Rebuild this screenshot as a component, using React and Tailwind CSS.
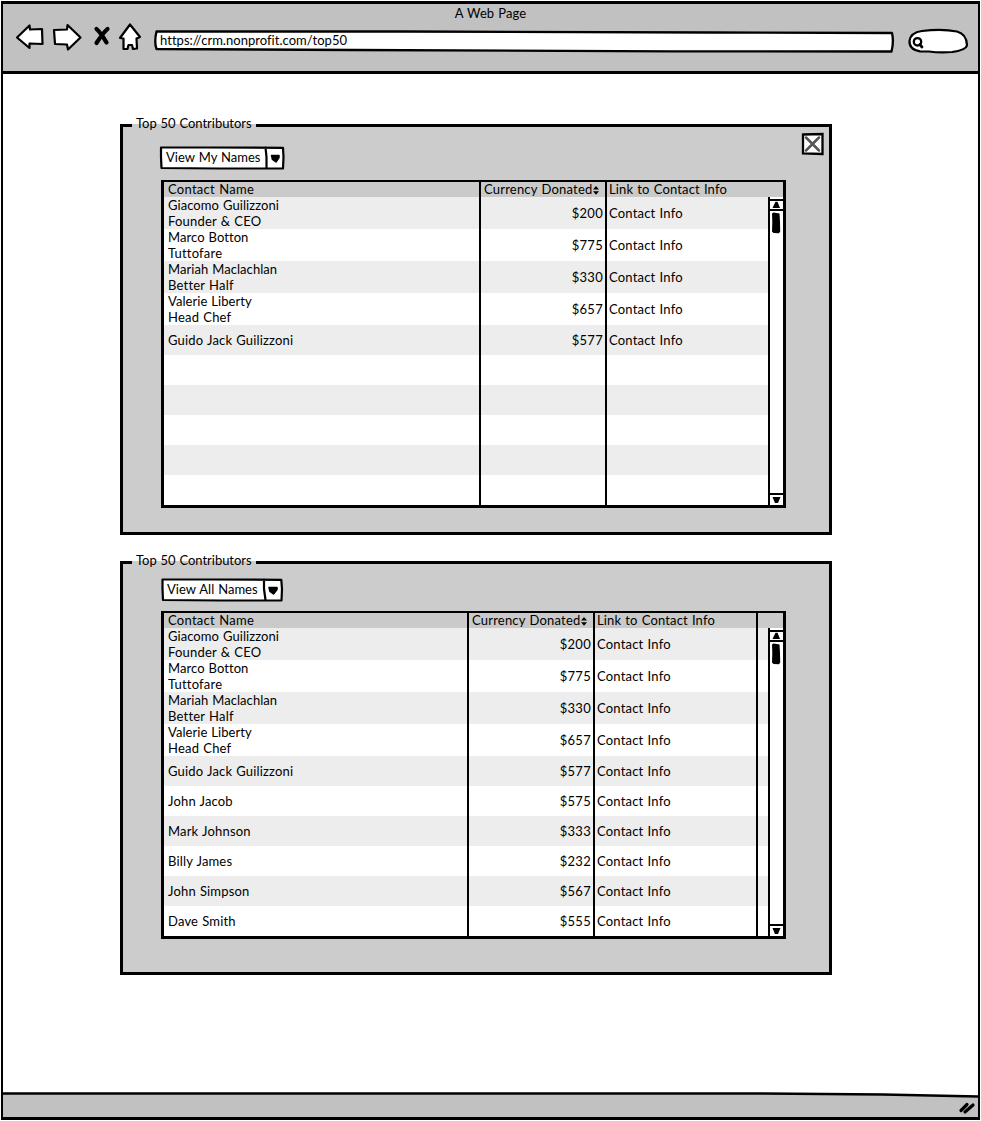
import React from "react";

const people = [
  { name: "Giacomo Guilizzoni", title: "Founder & CEO", amount: "$200" },
  { name: "Marco Botton", title: "Tuttofare", amount: "$775" },
  { name: "Mariah Maclachlan", title: "Better Half", amount: "$330" },
  { name: "Valerie Liberty", title: "Head Chef", amount: "$657" },
  { name: "Guido Jack Guilizzoni", amount: "$577" },
  { name: "John Jacob", amount: "$575" },
  { name: "Mark Johnson", amount: "$333" },
  { name: "Billy James", amount: "$232" },
  { name: "John Simpson", amount: "$567" },
  { name: "Dave Smith", amount: "$555" },
];

const myNames = [...people.slice(0, 5), {}, {}, {}, {}, {}];

function NavIcons() {
  return (
    <svg className="h-[36px] w-[130px] shrink-0" viewBox="12 20 130 36" fill="#fff" stroke="#000" strokeWidth="2.2" strokeLinejoin="round" strokeLinecap="round">
      <path d="M17 37.5 L29.5 25.5 L30 29.5 L42 29 L42.5 44 L29.5 43.5 L29.5 48 Z" />
      <path d="M54 30 L67 29.5 L67.5 25 L80.5 37.5 L68 49.5 L67 44.5 L55 44 Z" />
      <path d="M130 24.5 L140 37 L136.5 38.5 L137 48.5 L133 49 L132 45 L128.5 45 L127.5 49 L123.5 49 L123.5 38.5 L120 38 Z" />
      <path d="M96.5 29 Q101 33 106.5 42.5 M107.5 29 Q103 33 96.5 43" fill="none" strokeWidth="4.2" />
    </svg>
  );
}

function AddressBar() {
  return (
    <div className="relative ml-[10px] mt-[7px] flex h-[24px] w-[743px] shrink-0 items-center pb-[2px] pl-[8px]">
      <svg className="absolute inset-0" width="743" height="24" viewBox="0 0 743 24">
        <path d="M4.5 2.500 L250 2.500 L560 3.500 L740 4 Q742 13 739.5 22.500 L520 22.3 L200 21 L4.5 20 Q2 13 4.5 2.500 Z" fill="#fff" stroke="#000" strokeWidth="2.3" strokeLinejoin="round" />
      </svg>
      <span className="relative text-[13px] leading-[16px] tracking-[0.03px]">https://crm.nonprofit.com/top50</span>
    </div>
  );
}

function SearchPill() {
  return (
    <svg className="ml-[11px] mt-[5px] h-[28px] w-[64px] shrink-0" viewBox="906 26 64 28" fill="none" stroke="#000" strokeWidth="2.2" strokeLinecap="round">
      <path d="M920 50.3 Q909 48.5 909.5 40 Q910.5 31.5 922 30 Q942 27.5 957 30.5 Q966.5 33 967 44 Q966.500 49 952 51 Q940 52 929 50.5 Z" fill="#fff" />
      <circle cx="917.5" cy="40.800" r="3.7" strokeWidth="2.3" />
      <path d="M919.8 43.500 L922 46" strokeWidth="2.7" />
    </svg>
  );
}

function Select({ label, wide }) {
  return (
    <div className={wide ? "relative flex h-[25px] w-[126px] items-center pl-[7px] pt-[1px]" : "relative flex h-[25px] w-[123px] items-center pl-[6px] pt-[1px]"}>
      <svg className="absolute inset-0 h-full w-full" viewBox={wide ? "0 0 126 25" : "0 0 123 25"} fill="none" stroke="#000" strokeWidth="2.200" strokeLinejoin="round" strokeLinecap="round">
        {wide ? (
          <path d="M2 2.500 L50 2.500 L124 2.800 L124.500 12 L124 23.500 L60 23.500 L2.500 23 L2 12 Z M106.500 2.500 L107.500 12 L107.500 23" fill="#fff" />
        ) : (
          <path d="M1.500 2.500 L50 2.500 L120.300 2.800 L121 12 L120.500 23.500 L60 23.500 L2 23 L1.500 12 Z M103 2.500 L103 12 L104.500 23" fill="#fff" />
        )}
        {wide ? (
          <path d="M112.500 10.500 L120 10.500 L120 12.500 L117 17 L113.500 14.500 Z" fill="#000" strokeWidth="1.500" />
        ) : (
          <path d="M108 10.500 L116 10.500 L116 12.500 L112.500 17 L109 14.500 Z" fill="#000" strokeWidth="1.500" />
        )}
      </svg>
      <span className="relative tracking-[0.02px]">{label}</span>
    </div>
  );
}

function ScrollBar() {
  return (
    <div className="flex w-[15px] shrink-0 flex-col border-l-2 border-black bg-white pt-[2px]">
      <div className="flex h-[12px] items-center justify-center border-y-2 border-black">
        <svg width="11" height="8" viewBox="0 0 11 8"><path d="M1.500 7 L4.500 0.800 L6.500 0.800 L9 7 Z" /></svg>
      </div>
      <svg className="mt-px h-[22px] w-[12px]" viewBox="0 0 12 22">
        <path d="M2 1.500 L3.500 0.500 L9.500 1.500 L10 10 L10.200 19.500 L9 21.200 L3.500 21 L2 19.500 L2.300 10 Z" />
      </svg>
      <div className="grow" />
      <div className="flex h-[12px] items-center justify-center border-t-2 border-black">
        <svg width="11" height="8" viewBox="0 0 11 8"><path d="M1.500 1 L9.500 1 L7 7 L4 7 Z" /></svg>
      </div>
    </div>
  );
}

function SortIcon() {
  return (
    <svg className="ml-[1px] mt-[4px] h-[9px] w-[6px]" viewBox="0 0 6 9">
      <path d="M0 3.500 L3 0 L6 3.500 Z M0 5.200 L3 8.700 L6 5.200 Z" />
    </svg>
  );
}

function Table({ rows, extra }) {
  const cols = extra
    ? "grid grid-cols-[303px_126px_163px_1fr]"
    : "grid grid-cols-[315px_126px_1fr]";
  return (
    <div className="flex h-[328px] w-[625px] flex-col border-[3px] border-t-2 border-black">
      <div className={`${cols} h-[15px] shrink-0 bg-[#cacaca] leading-[15px]`}>
        <div className="pl-[4px] tracking-[0.28px]">Contact Name</div>
        <div className="flex whitespace-nowrap border-l-2 border-black pl-[3px] tracking-[0.2px]">Currency Donated<SortIcon /></div>
        <div className="whitespace-nowrap border-l-2 border-black pl-[2px] tracking-[0.15px]">Link to Contact Info</div>
        {extra && <div className="border-l-2 border-black" />}
      </div>
      <div className="flex min-h-0 grow">
        <div className="grow">
          {rows.map((r, i) => (
            <div key={i} className={`${cols} ${r.title ? "h-[32px]" : "h-[30px]"} ${i % 2 ? "bg-white" : "bg-[#ededed]"}`}>
              <div className="flex flex-col justify-center pl-[4px] leading-[16px]">
                <div className={r.title ? "tracking-[0.06px]" : "tracking-[0.17px]"}>{r.name}</div>
                {r.title && <div>{r.title}</div>}
              </div>
              <div className="flex items-center justify-end border-l-2 border-black pr-[2px] pt-[2px] tracking-[0.3px]">{r.amount}</div>
              <div className="flex items-center border-l-2 border-black pl-[2px] pt-[2px]">{r.amount && "Contact Info"}</div>
              {extra && <div className="border-l-2 border-black" />}
            </div>
          ))}
        </div>
        <ScrollBar />
      </div>
    </div>
  );
}

function Panel({ children }) {
  return (
    <section className="w-[712px]">
      <div className="flex h-[3px] items-start bg-[#ccc]">
        <div className="h-[3px] w-[12px] bg-black" />
        <div className="flex h-[3px] w-[124px] items-center pl-[4px]">
          <h2 className="-mt-[5px] whitespace-nowrap leading-[16px] tracking-[-0.03px]">Top 50 Contributors</h2>
        </div>
        <div className="h-[3px] grow bg-black" />
      </div>
      <div className="border-[3px] border-t-0 border-black bg-[#ccc]">{children}</div>
    </section>
  );
}

export default function App() {
  return (
    <div className="h-[1121px] w-[981px] overflow-hidden bg-white p-[1px] font-['Lato',sans-serif] text-[13px] tracking-[0.2px] text-black [word-spacing:0.6px]">
      <div className="flex h-[1119px] w-[979px] flex-col border-x-2 border-y-[3px] border-black">
        <header className="h-[70px] shrink-0 border-b-[3px] border-black bg-[#c1c1c1]">
          <div className="pt-[1px] text-center leading-[17px] tracking-[0.1px]">A Web Page</div>
          <div className="flex pl-[9px]">
            <div className="-mt-[2px]"><NavIcons /></div>
            <AddressBar />
            <SearchPill />
          </div>
        </header>
        <main className="grow pl-[117px] pt-[50px]">
          <Panel>
            <div className="h-[405px] pl-[38px] pt-[18px]">
              <div className="flex h-[35px] items-start justify-between pr-[5px]">
                <div className="-ml-[2px]"><Select label="View My Names" wide /></div>
                <svg className="-mt-[13px]" width="24" height="24" viewBox="0 0 24 24">
                  <path d="M3 2.500 L22.500 2 L22.500 22 L3 21.500 Z" fill="#fff" stroke="#000" strokeWidth="2.300" />
                  <path d="M6 5.500 L19 18.500 M19 5.500 L6 18.500" stroke="#555" strokeWidth="2.500" strokeLinecap="round" />
                </svg>
              </div>
              <Table rows={myNames} />
            </div>
          </Panel>
          <div className="h-[26px]" />
          <Panel>
            <div className="h-[408px] pl-[38px] pt-[13px]">
              <div className="h-[34px]"><Select label="View All Names" /></div>
              <Table rows={people} extra />
            </div>
          </Panel>
        </main>
        <footer className="h-[25px] shrink-0">
          <svg className="block h-full w-full" viewBox="0 0 975 25" preserveAspectRatio="none">
            <path d="M0 1.500 L760 1.500 L880 2.500 L975 4.500 L975 25 L0 25 Z" fill="#c1c1c1" />
            <path d="M0 1.500 L760 1.500 L880 2.500 L975 4.500" fill="none" stroke="#000" strokeWidth="2.600" />
            <path d="M958 18.500 L964 12.500 M962 20 L970 13" stroke="#000" strokeWidth="3.200" strokeLinecap="round" />
          </svg>
        </footer>
      </div>
    </div>
  );
}
